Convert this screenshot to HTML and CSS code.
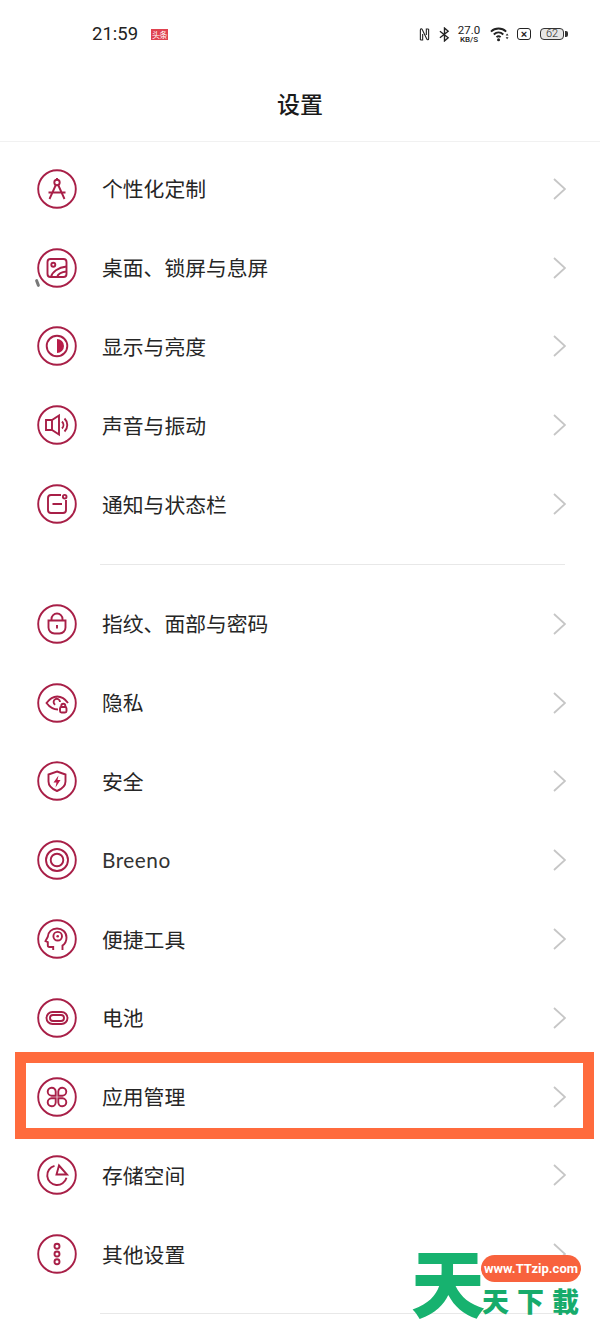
FILE: index.html
```html
<!DOCTYPE html>
<html lang="zh-CN">
<head>
  <meta charset="UTF-8" />
  <meta name="viewport" content="width=device-width, initial-scale=1" />
  <title>设置</title>
  <link rel="stylesheet" href="styles.css">
</head>
<body>
  <div class="status-bar">
    <div class="status-left">
      <span class="clock">21:59</span>
      <span class="news-badge">头条</span>
    </div>
    <div class="status-right">
      <svg class="st-nfc" viewBox="0 0 12 16"><path d="M1.5 14V3c0-1.500 1.500-1.500 2-.5L8.500 13c.5 1 2 1 2-.5V2M1.500 14H4V7.500M10.500 2H8v6.500"/></svg>
      <svg class="st-bt" viewBox="0 0 12 16"><path d="M1 4.500l9 7-4 3.500V1l4 3.500-9 7"/></svg>
      <div class="st-speed"><span class="st-value">27.0</span><span class="st-unit">KB/S</span></div>
      <svg class="st-wifi" viewBox="0 0 20 16">
        <path d="M1 5.500c4.500-4.300 11.500-4.300 16 0M4 8.500c3-2.800 7-2.800 10 0M6.800 11.300c1.400-1.200 3-1.200 4.400 0"/>
        <circle class="dot" cx="9" cy="14" r="1.600"/>
        <path class="dot" d="M16.500 9.500h3l-1.500-2zM16.500 11.500h3l-1.500 2z"/>
      </svg>
      <div class="st-sim">×</div>
      <div class="st-battery"><span class="st-level">62</span></div>
    </div>
  </div>

  <header class="title-bar">设置</header>

  <main class="settings">
    <section class="group">
      <a class="row">
        <svg class="icon" viewBox="0 0 40 40">
          <circle cx="20" cy="20" r="18.800"/>
          <circle cx="20" cy="13.500" r="2.700"/>
          <path d="M20 9v2M18.800 16L12.500 30M21.200 16L27.500 30M11.500 23.500h17"/>
        </svg>
        <span class="label">个性化定制</span>
        <svg class="chevron" viewBox="0 0 14 24"><path d="M2 2l11 10L2 22"/></svg>
      </a>
      <a class="row">
        <svg class="icon" viewBox="0 0 40 40">
          <circle cx="20" cy="20" r="18.800"/>
          <rect x="10.500" y="11" width="19" height="18" rx="3"/>
          <circle cx="16.300" cy="16.700" r="2"/>
          <path d="M14 29c1-5 7-9.500 15.500-10.500M20 29c1-2.800 5-5 9.500-5.500"/>
        </svg>
        <span class="label">桌面、锁屏与息屏</span>
        <svg class="chevron" viewBox="0 0 14 24"><path d="M2 2l11 10L2 22"/></svg>
      </a>
      <a class="row">
        <svg class="icon" viewBox="0 0 40 40">
          <circle cx="20" cy="20" r="18.800"/>
          <circle cx="20" cy="20" r="10.300"/>
          <path class="solid" d="M20 13a7 7 0 0 1 0 14z"/>
        </svg>
        <span class="label">显示与亮度</span>
        <svg class="chevron" viewBox="0 0 14 24"><path d="M2 2l11 10L2 22"/></svg>
      </a>
      <a class="row">
        <svg class="icon" viewBox="0 0 40 40">
          <circle cx="20" cy="20" r="18.800"/>
          <path d="M9 15h6l7-4.500v19L15 25H9zM15 15v10M25 16.500a5 5 0 0 1 0 7M27.500 13.500a9 9 0 0 1 0 13"/>
        </svg>
        <span class="label">声音与振动</span>
        <svg class="chevron" viewBox="0 0 14 24"><path d="M2 2l11 10L2 22"/></svg>
      </a>
      <a class="row">
        <svg class="icon" viewBox="0 0 40 40">
          <circle cx="20" cy="20" r="18.800"/>
          <path d="M24 11H14a3 3 0 0 0-3 3v12a3 3 0 0 0 3 3h12a3 3 0 0 0 3-3V16M15.500 20h9.500"/>
          <circle cx="27.700" cy="12.700" r="1.800"/>
        </svg>
        <span class="label">通知与状态栏</span>
        <svg class="chevron" viewBox="0 0 14 24"><path d="M2 2l11 10L2 22"/></svg>
      </a>
    </section>

    <hr class="divider" />

    <section class="group">
      <a class="row">
        <svg class="icon" viewBox="0 0 40 40">
          <circle cx="20" cy="20" r="18.800"/>
          <path d="M11.500 16.500h17v7a6 6 0 0 1-6 6h-5a6 6 0 0 1-6-6zM14.500 16.500v-1.500a5.500 5.500 0 0 1 11 0v1.500M20 21v3.500"/>
        </svg>
        <span class="label">指纹、面部与密码</span>
        <svg class="chevron" viewBox="0 0 14 24"><path d="M2 2l11 10L2 22"/></svg>
      </a>
      <a class="row">
        <svg class="icon" viewBox="0 0 40 40">
          <circle cx="20" cy="20" r="18.800"/>
          <path d="M21 26.500c-4.500 0-8.500-2.500-11.500-6.500 3-4 6.800-6.500 10.700-6.500 4.200 0 8 2.500 10.800 6.500M23 19a3.200 3.200 0 1 0-4.800 2.800"/>
          <rect x="23" y="24" width="6.500" height="5.500" rx="1.500"/>
          <path d="M24.300 24v-1.200a2 2 0 0 1 4 0V24"/>
        </svg>
        <span class="label">隐私</span>
        <svg class="chevron" viewBox="0 0 14 24"><path d="M2 2l11 10L2 22"/></svg>
      </a>
      <a class="row">
        <svg class="icon" viewBox="0 0 40 40">
          <circle cx="20" cy="20" r="18.800"/>
          <path d="M20 10.500l8.500 3v7c0 4.500-3.500 7.500-8.500 9.500-5-2-8.500-5-8.500-9.500v-7z"/>
          <path class="solid" d="M21.500 14.500l-5 7h3l-1 5 5-7.500h-3z"/>
        </svg>
        <span class="label">安全</span>
        <svg class="chevron" viewBox="0 0 14 24"><path d="M2 2l11 10L2 22"/></svg>
      </a>
      <a class="row">
        <svg class="icon" viewBox="0 0 40 40">
          <circle cx="20" cy="20" r="18.800"/>
          <circle cx="20" cy="20" r="11"/>
          <circle cx="20" cy="20" r="6.300"/>
        </svg>
        <span class="label label-latin">Breeno</span>
        <svg class="chevron" viewBox="0 0 14 24"><path d="M2 2l11 10L2 22"/></svg>
      </a>
      <a class="row">
        <svg class="icon" viewBox="0 0 40 40">
          <circle cx="20" cy="20" r="18.800"/>
          <path d="M25.500 31v-4.500c2.600-1.700 4-4.500 4-8 0-5.200-4.200-9-9.500-9s-9 3.500-9.200 8.300L8.500 22l2.300 1.200v3c0 1 .8 1.800 1.700 1.800h3.700v3"/>
          <circle cx="20.700" cy="17.200" r="4.300"/>
          <circle class="solid" cx="20.700" cy="17.200" r="1.300"/>
        </svg>
        <span class="label">便捷工具</span>
        <svg class="chevron" viewBox="0 0 14 24"><path d="M2 2l11 10L2 22"/></svg>
      </a>
      <a class="row">
        <svg class="icon" viewBox="0 0 40 40">
          <circle cx="20" cy="20" r="18.800"/>
          <rect x="9.500" y="14" width="21" height="12" rx="6"/>
          <rect x="13" y="17" width="14" height="6" rx="3"/>
        </svg>
        <span class="label">电池</span>
        <svg class="chevron" viewBox="0 0 14 24"><path d="M2 2l11 10L2 22"/></svg>
      </a>
      <a class="row">
        <svg class="icon" viewBox="0 0 40 40">
          <circle cx="20" cy="20" r="18.800"/>
          <path d="M18.700 18.700h-4.200a4 4 0 1 1 4.200-4.200zM21.300 18.700v-4.200a4 4 0 1 1 4.200 4.200zM18.700 21.300v4.200a4 4 0 1 1-4.200-4.200zM21.300 21.300h4.200a4 4 0 1 1-4.200 4.200z"/>
        </svg>
        <span class="label">应用管理</span>
        <svg class="chevron" viewBox="0 0 14 24"><path d="M2 2l11 10L2 22"/></svg>
      </a>
      <a class="row">
        <svg class="icon" viewBox="0 0 40 40">
          <circle cx="20" cy="20" r="18.800"/>
          <path d="M17.500 10.800a9.800 9.800 0 1 0 12 12M22 10.500l8 9H19.500z"/>
        </svg>
        <span class="label">存储空间</span>
        <svg class="chevron" viewBox="0 0 14 24"><path d="M2 2l11 10L2 22"/></svg>
      </a>
      <a class="row">
        <svg class="icon" viewBox="0 0 40 40">
          <circle cx="20" cy="20" r="18.800"/>
          <circle cx="20" cy="12.300" r="2.500"/>
          <circle cx="20" cy="20" r="2.500"/>
          <circle cx="20" cy="27.700" r="2.500"/>
        </svg>
        <span class="label">其他设置</span>
        <svg class="chevron" viewBox="0 0 14 24"><path d="M2 2l11 10L2 22"/></svg>
      </a>
    </section>

    <hr class="divider divider-end" />
  </main>

  <!-- marker over the app management row -->
  <div class="callout"></div>
  <span class="speck"></span>

  <div class="site-mark">
    <span class="mark-big">天</span>
    <span class="mark-url">www.TTzip.com</span>
    <span class="mark-name">天下載</span>
  </div>
</body>
</html>
```

FILE: styles.css
```css
html, body {
  margin: 0;
  padding: 0;
}
body {
  position: relative;
  width: 600px;
  height: 1340px;
  overflow: hidden;
  background-color: #fff;
  color: #222;
  font-family: "Noto Sans CJK SC", "Noto Sans", sans-serif;
}

/* status bar */
.status-bar {
  height: 68px;
  display: flex;
  justify-content: space-between;
  align-items: center;
  padding: 0 36px 0 92px;
  box-sizing: border-box;
}
.status-left {
  display: flex;
  align-items: center;
  gap: 13px;
}
.clock {
  font-family: Roboto, sans-serif;
  font-size: 18.5px;
  color: #222;
}
.news-badge {
  width: 17px;
  height: 11px;
  background-color: #e04350;
  color: #fff;
  font-size: 8px;
  line-height: 11px;
  text-align: center;
  letter-spacing: -0.5px;
  overflow: hidden;
}
.status-right {
  display: flex;
  align-items: center;
  color: #222;
}
.status-right svg {
  fill: none;
  stroke: #222;
  stroke-width: 1.5;
}
.st-nfc {
  width: 11px;
  height: 15px;
  margin-right: 9px;
}
.st-nfc path {
  stroke-width: 1.2;
}
.st-bt {
  width: 11px;
  height: 15px;
  margin-right: 8px;
}
.st-speed {
  display: flex;
  flex-direction: column;
  align-items: center;
  width: 22px;
  margin-right: 10px;
  font-family: Roboto, sans-serif;
}
.st-value {
  font-size: 11.5px;
  line-height: 11px;
}
.st-unit {
  font-size: 8px;
  font-weight: 500;
  line-height: 8px;
}
.status-right .st-wifi {
  width: 19px;
  height: 16px;
  margin-right: 8px;
  stroke-width: 2;
}
.st-wifi .dot {
  fill: #222;
  stroke: none;
}
.st-sim {
  width: 12px;
  height: 10px;
  border: 1.5px solid #222;
  border-radius: 3px;
  margin-right: 9px;
  font-family: "Liberation Sans", sans-serif;
  font-size: 11px;
  font-weight: bold;
  line-height: 10px;
  text-align: center;
}
.st-battery {
  position: relative;
  width: 22px;
  height: 10px;
  border: 1.5px solid #333;
  border-radius: 4px;
  background-color: #e6e6e6;
  text-align: center;
}
.st-battery::after {
  content: "";
  position: absolute;
  right: -4.5px;
  top: 2px;
  width: 2.5px;
  height: 6px;
  background-color: #333;
  border-radius: 0 2px 2px 0;
}
.st-level {
  display: block;
  font-family: Roboto, sans-serif;
  font-weight: 300;
  font-size: 11px;
  line-height: 10px;
}

/* page title */
.title-bar {
  height: 74px;
  padding-bottom: 4px;
  box-sizing: border-box;
  display: flex;
  align-items: center;
  justify-content: center;
  border-bottom: 1px solid #f1f1f1;
  font-size: 23px;
  font-weight: 500;
  color: #1a1a1a;
}

/* settings list */
.settings {
  padding-top: 7.5px;
}
.row {
  display: flex;
  align-items: center;
  height: 78.8px;
  padding: 0 34px 0 37px;
}
.icon {
  width: 40px;
  height: 40px;
  flex: none;
  fill: none;
  stroke: #a81f47;
  stroke-width: 1.9;
}
.icon .solid {
  fill: #b81c49;
  stroke: none;
}
.label {
  flex: 1;
  margin-left: 25px;
  padding-bottom: 1px;
  font-size: 20.8px;
  line-height: 30px;
  color: #262626;
}
.label-latin {
  font-family: Lato, "Noto Sans", sans-serif;
  letter-spacing: 0.5px;
  color: #333;
}
.chevron {
  width: 14px;
  height: 24px;
  flex: none;
  fill: none;
  stroke: #c6c6c6;
  stroke-width: 1.8;
}
.divider {
  margin: 20.5px 35px 19.5px 100px;
  border: 0;
  border-top: 1px solid #e8e8e8;
}
.divider-end {
  margin-top: 19.5px;
}

/* orange outline around one row */
.callout {
  position: absolute;
  left: 15px;
  top: 1052px;
  width: 557px;
  height: 65px;
  border: 11px solid #ff6b3d;
}
.speck {
  position: absolute;
  left: 36px;
  top: 279px;
  width: 3px;
  height: 8px;
  background-color: #777;
  border-radius: 1.5px;
  transform: rotate(-20deg);
}

/* site watermark, bottom right */
.site-mark {
  position: absolute;
  left: 412px;
  top: 1250px;
  width: 172px;
  height: 72px;
}
.mark-big {
  position: absolute;
  left: -1px;
  top: -18px;
  font-size: 74px;
  line-height: 96px;
  font-weight: 900;
  color: #17b26f;
}
.mark-url {
  position: absolute;
  left: 69px;
  top: 5px;
  width: 100px;
  height: 27px;
  background-color: #f8623d;
  border-radius: 14px;
  color: #fff;
  font-family: Roboto, sans-serif;
  font-size: 13px;
  font-weight: 700;
  line-height: 27px;
  text-align: center;
  white-space: nowrap;
}
.mark-name {
  position: absolute;
  left: 70px;
  top: 33px;
  font-size: 27px;
  line-height: 36px;
  font-weight: 900;
  letter-spacing: 8px;
  white-space: nowrap;
  color: #17ab6b;
}
```
